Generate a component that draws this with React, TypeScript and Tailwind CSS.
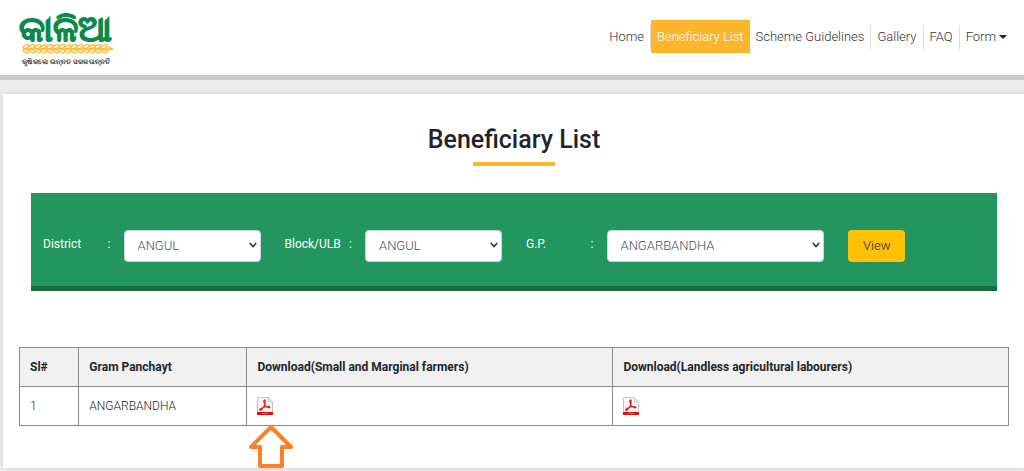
import React from 'react';

const navItems = [
    { label: 'Home' },
    { label: 'Beneficiary List', active: true },
    { label: 'Scheme Guidelines' },
    { label: 'Gallery' },
    { label: 'FAQ' },
];

function Logo() {
    return (
        <svg viewBox="0 0 96 60" className="w-24 h-15" role="img" aria-label="କାଳିଆ">
            <text
                x="47"
                y="33"
                textAnchor="middle"
                fontSize="35"
                fontWeight="700"
                fill="#0a8a4b"
                stroke="#0a8a4b"
                strokeWidth="1"
            >
                କାଳିଆ
            </text>
            {/* Wheat ear under the name */}
            <g stroke="#fbb52d" strokeLinecap="round" fill="#fff3dc" strokeWidth="1">
                {Array.from({ length: 14 }, (_, i) => (
                    <g key={i}>
                        <ellipse cx={8 + i * 6} cy="38.500" rx="3" ry="1.600" transform={`rotate(-25 ${8 + i * 6} 38.500)`} />
                        <ellipse cx={8 + i * 6} cy="43" rx="3" ry="1.600" transform={`rotate(25 ${8 + i * 6} 43)`} />
                    </g>
                ))}
                <path d="M5 40.700h90M89 38.500l6 2.200-6 2.200" fill="none" />
            </g>
            <text x="48" y="56" textAnchor="middle" fontSize="7" fontWeight="700" fill="#333333">
                କୃଷି କଲେ ଉନ୍ନତ ସକଳ ଉନ୍ନତି
            </text>
        </svg>
    );
}

function PdfIcon() {
    return (
        <svg viewBox="0 0 16 18" className="w-4 h-[18px]" aria-hidden="true">
            <path d="M.5.5h10.500l4.500 4.500v12.500h-15z" fill="#fafafa" stroke="#c4c4c4" />
            <path d="M11 .5v4.500h4.500z" fill="#e4e4e4" stroke="#c4c4c4" strokeWidth=".7" />
            <path
                d="M7.300 3c1.300-.4.900 2.700.3 4.600C6.600 10.600 4.300 13.600 3 13.300c-1.200-.5 1.300-2.400 3.500-3 2.600-.8 6.300-1.200 6.500-.1.200 1.200-2.700.5-4.200-1.100C7.200 7.500 6 3.500 7.300 3z"
                fill="none"
                stroke="#e0201b"
                strokeWidth="1.200"
            />
            <path d="M0 15h16v3H0z" fill="#d9110e" />
            <path d="M5 16.500h6" stroke="#f0827f" strokeWidth="1" strokeDasharray="1.600 .5" />
        </svg>
    );
}

function FilterSelect({ id, label, value, wide = false }: { id: string; label: string; value: string; wide?: boolean }) {
    return (
        <>
            <label htmlFor={id} className="col-span-1 flex justify-between pl-3 pr-px pt-1 text-xs leading-5 text-white whitespace-nowrap">
                <span>{label}</span>
                <span>:</span>
            </label>
            <div className={wide ? 'col-span-3 px-3' : 'col-span-2 px-3'}>
                <div className="relative">
                    <select
                        id={id}
                        defaultValue={value}
                        className="block w-full h-8 appearance-none rounded border border-[#ced4da] bg-white pl-[13px] pr-6 text-[13px] font-light text-[#495057]"
                    >
                        <option>{value}</option>
                    </select>
                    <svg viewBox="0 0 8 6" className="pointer-events-none absolute right-1 top-3 w-2 h-1.5" aria-hidden="true">
                        <path d="M.8 1L4 4.500 7.200 1" fill="none" stroke="#333333" strokeWidth="1.600" />
                    </svg>
                </div>
            </div>
        </>
    );
}

function DownloadLink({ label }: { label: string }) {
    return (
        <a href="#" className="inline-block align-middle" aria-label={label}>
            <PdfIcon />
        </a>
    );
}

export default function App() {
    return (
        <div className="overflow-hidden bg-[#ececec] pb-1 font-['Roboto',sans-serif] text-[#212529]">
            <header className="flex items-start justify-between bg-white border-b-5 border-[#cacaca] h-20 pl-[18px] pr-[17px]">
                <a href="#" className="pt-2">
                    <Logo />
                </a>
                <nav className="flex items-center pt-5 text-[13px] font-light text-[#333333]">
                    {navItems.map((item) =>
                        item.active ? (
                            <a key={item.label} href="#" className="bg-[#fdb62b] px-1.5 pt-[7px] pb-1.5 leading-5 text-white">
                                {item.label}
                            </a>
                        ) : (
                            <a key={item.label} href="#" className="border-r border-[#dddddd] px-1.5 py-0.5 leading-5">
                                {item.label}
                            </a>
                        )
                    )}
                    <button type="button" className="flex items-center gap-[3px] pl-1.5 leading-5">
                        Form
                        <span className="border-x-4 border-t-4 border-x-transparent border-t-[#212529]" />
                    </button>
                </nav>
            </header>

            <main className="mt-3.5 ml-[3px] bg-white pl-4 pr-[15px] pt-7 pb-[42px] shadow-[0_0_5px_#cccccc]">
                <h1 className="text-center text-[25px] font-medium leading-9">Beneficiary List</h1>
                <div className="mx-auto mt-1 h-1 w-[82px] bg-[#fdb62b]" />

                <form className="mx-3 mt-[27px] grid grid-cols-12 border-b-5 border-[#136c43] bg-[#23955f] pt-[37px] pb-6">
                    <FilterSelect id="district" label="District" value="ANGUL" />
                    <FilterSelect id="block" label="Block/ULB" value="ANGUL" />
                    <FilterSelect id="gp" label="G.P." value="ANGARBANDHA" wide />
                    <div className="col-span-2 pl-3">
                        <button type="button" className="h-8 rounded bg-[#ffc107] px-[15px] text-[13px] font-light">
                            View
                        </button>
                    </div>
                </form>

                <table className="mt-14 w-full table-fixed border-collapse text-left text-xs">
                    <thead>
                        <tr className="h-[39px] bg-[#f1f1f1]">
                            <th className="w-[6%] border border-[#8a8a8a] px-2.5">Sl#</th>
                            <th className="w-[17%] border border-[#8a8a8a] px-2.5">Gram Panchayt</th>
                            <th className="w-[37%] border border-[#8a8a8a] px-2.5">Download(Small and Marginal farmers)</th>
                            <th className="border border-[#8a8a8a] px-2.5">Download(Landless agricultural labourers)</th>
                        </tr>
                    </thead>
                    <tbody>
                        <tr className="h-[39px] font-light">
                            <td className="border border-[#8a8a8a] px-2.5">1</td>
                            <td className="border border-[#8a8a8a] px-2.5">ANGARBANDHA</td>
                            <td className="relative border border-[#8a8a8a] px-2.5">
                                <DownloadLink label="Download small and marginal farmers list" />
                                {/* Pointer to the first download */}
                                <svg viewBox="0 0 44 44" className="absolute left-0.5 top-full w-11 h-11" aria-hidden="true">
                                    <path
                                        d="M22 2L42 22H33V41H11V22H2z"
                                        fill="#ffffff"
                                        stroke="#ff7f27"
                                        strokeWidth="4"
                                        strokeLinejoin="round"
                                    />
                                </svg>
                            </td>
                            <td className="border border-[#8a8a8a] px-2.5">
                                <DownloadLink label="Download landless agricultural labourers list" />
                            </td>
                        </tr>
                    </tbody>
                </table>
            </main>
        </div>
    );
}
